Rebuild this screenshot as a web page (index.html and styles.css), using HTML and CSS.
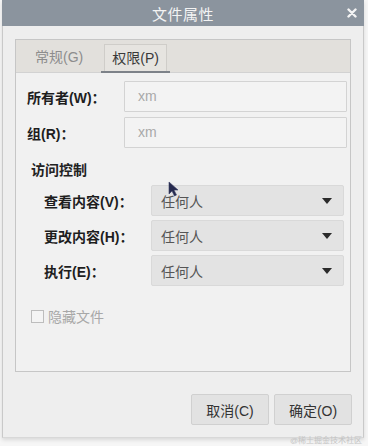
FILE: index.html
```html
<!DOCTYPE html>
<html lang="zh-CN">
<head>
<meta charset="utf-8">
<title>文件属性</title>
<link rel="stylesheet" href="styles.css">
</head>
<body>
<div class="window">
  <div class="titlebar">
    <span class="title">文件属性</span>
    <svg class="close" width="10" height="10" viewBox="0 0 10 10"><path d="M1.5 1.5L8.5 8.5M8.5 1.5L1.5 8.5" stroke="#f4f4f4" stroke-width="2.4" stroke-linecap="round"/></svg>
  </div>
  <div class="body">
    <div class="tabframe">
      <div class="tabbar">
        <div class="tab">常规(G)</div>
        <div class="tab active">权限(P)</div>
      </div>
      <div class="panel">
        <div class="owner-grid">
          <label class="lbl">所有者(W)：</label>
          <div class="input">xm</div>
          <label class="lbl">组(R)：</label>
          <div class="input">xm</div>
        </div>
        <div class="section">访问控制</div>
        <div class="access-grid">
          <label class="lbl">查看内容(V)：</label>
          <div class="combo"><span>任何人</span><i class="arrow"></i></div>
          <label class="lbl">更改内容(H)：</label>
          <div class="combo"><span>任何人</span><i class="arrow"></i></div>
          <label class="lbl">执行(E)：</label>
          <div class="combo"><span>任何人</span><i class="arrow"></i></div>
        </div>
        <div class="check"><span class="box"></span>隐藏文件</div>
      </div>
    </div>
    <div class="buttons">
      <button class="btn">取消(C)</button>
      <button class="btn">确定(O)</button>
    </div>
  </div>
</div>
<svg class="cursor" width="12" height="16" viewBox="0 0 12 16"><path d="M1 1L1 13L4 10L6.5 15L8.5 14L6 9L10 9Z" fill="#262a4e" stroke="#3a3f66" stroke-width="0.6"/></svg>
<div class="watermark">@稀土掘金技术社区</div>
</body>
</html>
```
FILE: styles.css
```css
html, body {
  margin: 0;
  padding: 0;
}
body {
  width: 368px;
  height: 446px;
  background: #f6f6f6;
  font-family: "Liberation Sans", "Noto Sans CJK SC", sans-serif;
  font-size: 14px;
  color: #222;
  position: relative;
  overflow: hidden;
}
.window {
  margin-left: 2px;
  width: 362px;
  height: 438px;
  box-sizing: border-box;
  background: #eeeeee;
  border-left: 1px solid #c9c9c9;
  border-right: 1px solid #c9c9c9;
  border-bottom: 1px solid #d8d8d8;
  box-shadow: 0 2px 4px rgba(0,0,0,0.12);
  display: flex;
  flex-direction: column;
}
.titlebar {
  height: 26px;
  margin: 0 -1px;
  background: #8b949e;
  display: flex;
  align-items: center;
  justify-content: center;
  position: relative;
}
.title {
  color: #f3f3f3;
  font-size: 15px;
  letter-spacing: 0.5px;
}
.close {
  position: absolute;
  right: 7px;
  top: 8px;
}
.body {
  flex: 1;
  padding: 13px 12px 12px 12px;
  display: flex;
  flex-direction: column;
}
.tabframe {
  height: 333px;
  box-sizing: border-box;
  border: 1px solid #c6c6c6;
  display: flex;
  flex-direction: column;
}
.tabbar {
  height: 33px;
  box-sizing: border-box;
  background: #e2e0dc;
  display: flex;
  align-items: flex-end;
  padding-left: 19px;
  gap: 21px;
  border-bottom: 1px solid #d2d2d2;
}
.tab {
  height: 27px;
  line-height: 27px;
  color: #8d8d8d;
  font-size: 14px;
  margin-bottom: 1px;
}
.active {
  color: #3a3a3a;
  padding: 0 7px;
  border: 1px solid #cfcdc9;
  border-bottom: none;
  background: #e6e4e0;
  position: relative;
  height: 26px;
}
.active::after {
  content: "";
  position: absolute;
  left: -4px;
  right: -4px;
  bottom: -2px;
  height: 2px;
  background: #7d8289;
}
.panel {
  flex: 1;
  background: #f1f1f1;
  padding: 8px 3px 0 11px;
}
.owner-grid {
  display: grid;
  grid-template-columns: 97px 1fr;
  row-gap: 5px;
  align-items: center;
}
.lbl {
  font-weight: bold;
  color: #1e1e1e;
  font-size: 14px;
  white-space: nowrap;
}
.input {
  height: 31px;
  box-sizing: border-box;
  border: 1px solid #d3d3d3;
  background: #f3f3f3;
  border-radius: 1px;
  color: #a9a9a9;
  line-height: 29px;
  padding-left: 13px;
  font-size: 14px;
}
.section {
  font-weight: bold;
  margin: 12px 0 0 4px;
  height: 20px;
  line-height: 20px;
}
.access-grid {
  display: grid;
  grid-template-columns: 107px 193px;
  row-gap: 4px;
  align-items: center;
  padding-left: 17px;
  margin-top: 5px;
}
.combo {
  height: 31px;
  box-sizing: border-box;
  border: 1px solid #d9d9d9;
  background: #e3e3e3;
  border-radius: 2px;
  display: flex;
  align-items: center;
  justify-content: space-between;
  padding: 0 9px 0 9px;
  color: #555;
  font-size: 14px;
}
.arrow {
  width: 0;
  height: 0;
  border-left: 5.5px solid transparent;
  border-right: 5.5px solid transparent;
  border-top: 6px solid #2b2b2b;
  margin-right: 2px;
}
.check {
  display: flex;
  align-items: center;
  margin: 20px 0 0 4px;
  color: #a8a8a8;
  font-size: 14px;
  gap: 4px;
}
.box {
  width: 11px;
  height: 11px;
  border: 1px solid #bdbdbd;
  background: #f4f4f4;
}
.buttons {
  display: flex;
  justify-content: flex-end;
  gap: 5px;
  margin-top: 22px;
  margin-right: -1px;
}
.btn {
  width: 78px;
  height: 31px;
  border: 1px solid #d0d0d0;
  background: #e2e2e2;
  border-radius: 2px;
  font-family: "Liberation Sans", "Noto Sans CJK SC", sans-serif;
  font-size: 14px;
  color: #333;
  padding: 0;
}
.cursor {
  position: absolute;
  left: 168px;
  top: 181px;
}
.watermark {
  position: absolute;
  right: 6px;
  bottom: 0;
  font-size: 8px;
  color: #c4c4c4;
  line-height: 10px;
}
```
